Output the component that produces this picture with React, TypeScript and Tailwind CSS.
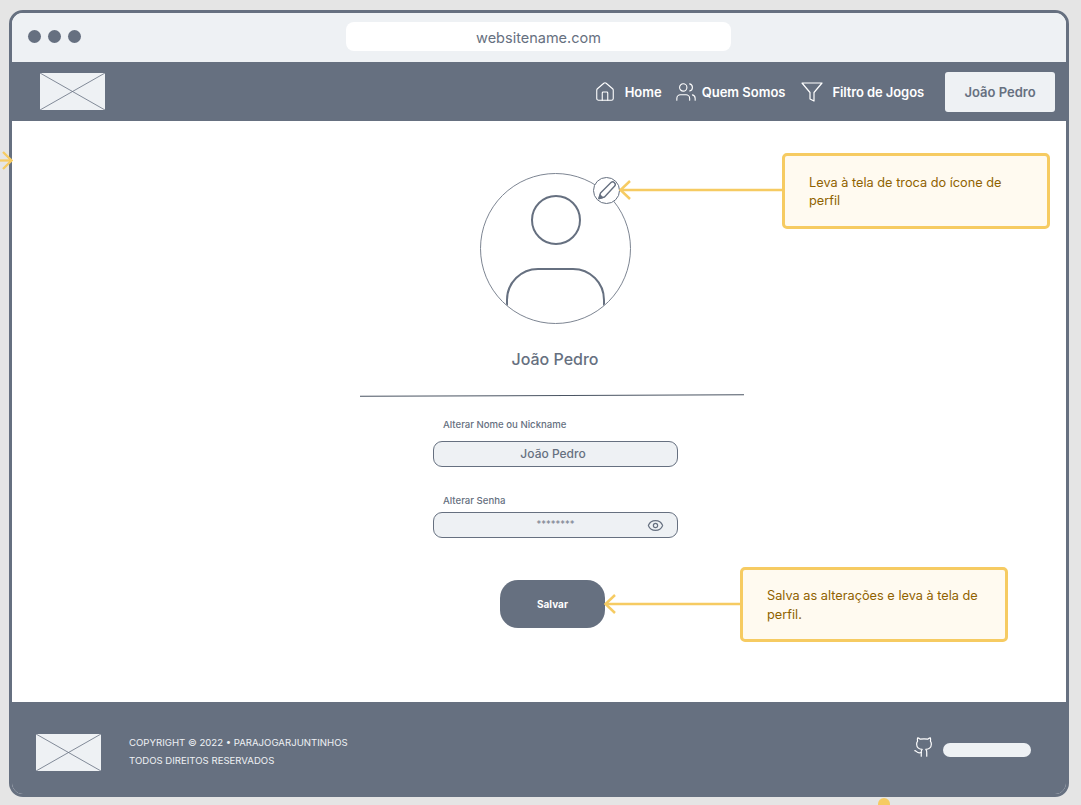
import React from 'react';
import { Eye, Github, House, Users } from 'lucide-react';

const LogoPlaceholder = ({ className = '' }: { className?: string }) => (
    <div className={`w-[65px] h-[37px] bg-[#eef1f4] shrink-0 ${className}`}>
        <svg width="65" height="37" viewBox="0 0 65 37" fill="none" stroke="#667080" strokeWidth="0.8">
            <line x1="0" y1="0" x2="65" y2="37" />
            <line x1="65" y1="0" x2="0" y2="37" />
        </svg>
    </div>
);

const Note = ({ className, text }: { className: string; text: string }) => (
    <div className={`absolute flex items-center bg-[#fffaf0] border-[3px] border-[#f6cb62] rounded-[5px] text-[12.75px] leading-[18.5px] text-[#8f6200] ${className}`}>
        <p className="mt-[2px]">{text}</p>
    </div>
);

// horizontal connector with the open arrow head on its left end
const Arrow = ({ className, width }: { className: string; width: number }) => (
    <svg className={`absolute ${className}`} width={width} height="20" viewBox={`0 0 ${width} 20`} fill="none" stroke="#f6cb62" strokeWidth="2.5">
        <line x1="1" y1="10" x2={width} y2="10" />
        <polyline points="11,1 1.5,10 11,19" />
    </svg>
);

export default function App() {
    return (
        <div className="relative w-[1081px] h-[805px] overflow-hidden bg-[#e5e5e5] pt-[10px] pl-[9px] font-['Inter',sans-serif]">
            <div className="w-[1060px] h-[787px] flex flex-col border-[3px] border-[#667080] rounded-[14px] overflow-hidden bg-white">

                {/* browser bar */}
                <div className="h-[49px] shrink-0 flex items-center bg-[#eef1f4] pl-[16px] pb-[2px]">
                    <div className="flex gap-[7px]">
                        <span className="w-[13px] h-[13px] rounded-full bg-[#667080]" />
                        <span className="w-[13px] h-[13px] rounded-full bg-[#667080]" />
                        <span className="w-[13px] h-[13px] rounded-full bg-[#667080]" />
                    </div>
                    <div className="ml-[265px] w-[385px] h-[29px] flex items-center justify-center rounded-lg bg-white pt-[2px] text-[14.5px] text-[#667080]">
                        websitename.com
                    </div>
                </div>

                {/* nav */}
                <div className="h-[59px] shrink-0 flex items-center justify-between bg-[#667080] pl-[28px] pr-[11px] text-white">
                    <LogoPlaceholder />
                    <div className="flex items-center mt-[1px] text-[13px] font-semibold">
                        <House className="w-[22px] h-[22px]" strokeWidth={1.2} />
                        <span className="ml-[9px] pt-[2px]">Home</span>
                        <Users className="ml-[13px] w-[22px] h-[22px]" strokeWidth={1.2} />
                        <span className="ml-[5px] pt-[2px]">Quem Somos</span>
                        <svg className="ml-[15px]" width="24" height="24" viewBox="0 0 24 24" fill="none" stroke="currentColor" strokeWidth="1.2" strokeLinejoin="round">
                            <polygon points="22 3 2 3 10 12.5 10 19 14 21 14 12.5 22 3" />
                        </svg>
                        <span className="ml-[8px] pt-[2px] tracking-[-0.1px]">Filtro de Jogos</span>
                        <div className="ml-[21px] w-[110px] h-[40px] flex items-center justify-center rounded-[3px] bg-[#eef1f4] pt-[2px] text-[#667080]">
                            João Pedro
                        </div>
                    </div>
                </div>

                {/* profile form */}
                <div className="flex-1 relative">
                    <div className="w-[384px] ml-[348px] flex flex-col items-center pt-[52px]">
                        <div className="ml-[7px] w-[151px] h-[151px] rounded-full border border-[#7d8592] overflow-hidden bg-white">
                            <div className="mx-auto mt-[21px] w-[50px] h-[50px] rounded-full border-2 border-[#667080]" />
                            <div className="mx-auto mt-[23px] w-[99px] h-[80px] rounded-t-[32px] border-2 border-[#667080]" />
                        </div>
                        <div className="h-[47px] ml-[6px] flex items-end text-[16px] font-medium leading-[24px] text-[#667080]">João Pedro</div>
                        <div className="w-[384px] mt-[24px] h-px bg-[#4b5563] rotate-[-0.2deg]" />

                        <div className="w-[245px] ml-[7px] mt-[23px] text-[#667080]">
                            <label className="block pl-[10px] text-[9.6px] font-medium leading-[12px]">Alterar Nome ou Nickname</label>
                            <div className="mt-[10px] h-[26px] flex items-center justify-center rounded-[9px] border border-[#667080] bg-[#eef1f4] pr-[5px] text-[12px] font-medium">
                                João Pedro
                            </div>
                            <label className="block mt-[28px] pl-[10px] text-[9.6px] font-medium leading-[12px]">Alterar Senha</label>
                            <div className="relative mt-[5px] h-[26px] flex items-center justify-center rounded-[9px] border border-[#667080] bg-[#eef1f4] text-[9.5px] text-[#7d8592]">
                                <span className="mb-[2px]">********</span>
                                <Eye className="absolute right-[13px] top-[4px] w-[17px] h-[17px] text-[#667080]" strokeWidth={1.7} />
                            </div>
                            <div className="mt-[42px] ml-[67px] w-[105px] h-[48px] flex items-center justify-center rounded-[18px] bg-[#667080] text-[10px] font-bold text-white">
                                Salvar
                            </div>
                        </div>
                    </div>

                    {/* edit badge over the avatar */}
                    <div className="absolute left-[581px] top-[56px] w-[27px] h-[27px] rounded-full border border-[#667080] bg-white">
                        <svg width="25" height="25" viewBox="0 0 25 25" fill="none" stroke="#667080" strokeWidth="1.4" strokeLinejoin="round">
                            <path d="M5 20.5 L6.5 15 L17 4.5 a2.6 2.6 0 0 1 3.7 3.6 L10.5 19 Z" />
                            <path d="M5 20.5 L6 17 L8.5 19.5 Z" fill="#667080" />
                        </svg>
                    </div>

                    <Arrow className="left-[607px] top-[59px]" width={163} />
                    <Arrow className="left-[592px] top-[473px]" width={136} />

                    <Note className="left-[770px] top-[32px] w-[268px] h-[76px] pl-[24px] pr-[30px]" text="Leva à tela de troca do ícone de perfil" />
                    <Note className="left-[728px] top-[446px] w-[268px] h-[75px] pl-[24px] pr-[20px]" text="Salva as alterações e leva à tela de perfil." />
                </div>

                {/* footer */}
                <div className="h-[92px] shrink-0 flex items-center bg-[#667080] pl-[24px] pr-[35px] text-white">
                    <LogoPlaceholder className="mt-[9px]" />
                    <div className="ml-[28px] mt-[8px] text-[9.6px] leading-[18px] text-[#eef1f4]">
                        <p>COPYRIGHT © 2022 • PARAJOGARJUNTINHOS</p>
                        <p>TODOS DIREITOS RESERVADOS</p>
                    </div>
                    <div className="ml-auto mt-[4px] flex items-center gap-[8px]">
                        <Github className="w-[22px] h-[22px] mb-[7px]" strokeWidth={1.3} />
                        <div className="w-[88px] h-[14px] rounded-full bg-[#eef1f4]" />
                    </div>
                </div>
            </div>

            {/* stray connector ends outside the frame */}
            <svg className="absolute left-0 top-[151px]" width="13" height="20" viewBox="0 0 13 20" fill="none" stroke="#f6cb62" strokeWidth="2.3">
                <line x1="0" y1="9.5" x2="11" y2="9.5" />
                <polyline points="3,1 11.5,9.5 3,18" />
            </svg>
            <div className="absolute left-[878px] top-[798px] w-[12px] h-[12px] rounded-full bg-[#f6cb62]" />
        </div>
    );
}
